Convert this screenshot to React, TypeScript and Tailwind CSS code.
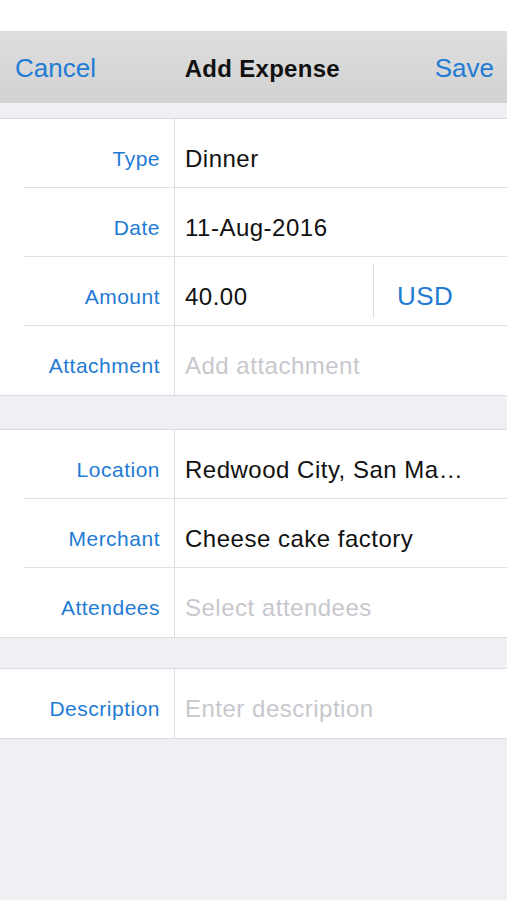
type Row = {
  label: string;
  value: string;
  placeholder?: boolean;
  currency?: string;
};

const sections: { gap: string; rows: Row[] }[] = [
  {
    gap: "mt-[15px]",
    rows: [
      { label: "Type", value: "Dinner" },
      { label: "Date", value: "11-Aug-2016" },
      { label: "Amount", value: "40.00", currency: "USD" },
      { label: "Attachment", value: "Add attachment", placeholder: true },
    ],
  },
  {
    gap: "mt-[33px]",
    rows: [
      { label: "Location", value: "Redwood City, San Ma\u2026" },
      { label: "Merchant", value: "Cheese cake factory" },
      { label: "Attendees", value: "Select attendees", placeholder: true },
    ],
  },
  {
    gap: "mt-[30px]",
    rows: [{ label: "Description", value: "Enter description", placeholder: true }],
  },
];

function FormRow({ row, last }: { row: Row; last: boolean }) {
  return (
    <div
      className={`ml-6 flex h-[69px] ${last ? "" : "border-b border-[#e0e0e4]"}`}
    >
      <div className="flex w-[150px] shrink-0 items-center justify-end pt-[11px] pr-[14px]">
        <span className="text-[21px] tracking-[0.5px] text-[#1f7bd4]">
          {row.label}
        </span>
      </div>
      <div className="flex min-w-0 flex-1 items-center border-l border-[#dcdce0]">
        <span
          className={`whitespace-nowrap pt-[11px] pl-[10px] text-[24px] tracking-[0.5px] ${
            row.placeholder ? "text-[#c7c7cd]" : "text-[#111]"
          } ${row.currency ? "w-[198px]" : ""}`}
        >
          {row.value}
        </span>
        {row.currency && (
          <div className="flex h-[54px] items-center border-l border-[#dcdce0] pl-[23px]">
            <span className="pt-[11px] text-[26px] tracking-[0.4px] text-[#1f7bd4]">
              {row.currency}
            </span>
          </div>
        )}
      </div>
    </div>
  );
}

export default function App() {
  return (
    <div
      className="flex min-h-[900px] w-full flex-col bg-[#efeff4]"
      style={{ fontFamily: '"Liberation Sans", Arial, sans-serif' }}
    >
      <div className="h-[31px] bg-white" />
      <div className="flex h-[72px] items-center justify-between bg-gradient-to-b from-[#dedede] to-[#d2d2d2] pt-[3px] pr-[13px] pl-[15px]">
        <span className="text-[26px] text-[#1f7bd4]">Cancel</span>
        <span className="mr-[6px] text-[24px] font-bold tracking-[0.3px] text-[#111]">
          Add Expense
        </span>
        <span className="text-[26px] text-[#1f7bd4]">Save</span>
      </div>
      {sections.map((s, i) => (
        <div key={i} className={`${s.gap} border-y border-[#dcdce0] bg-white`}>
          {s.rows.map((row, j) => (
            <FormRow key={row.label} row={row} last={j === s.rows.length - 1} />
          ))}
        </div>
      ))}
    </div>
  );
}
